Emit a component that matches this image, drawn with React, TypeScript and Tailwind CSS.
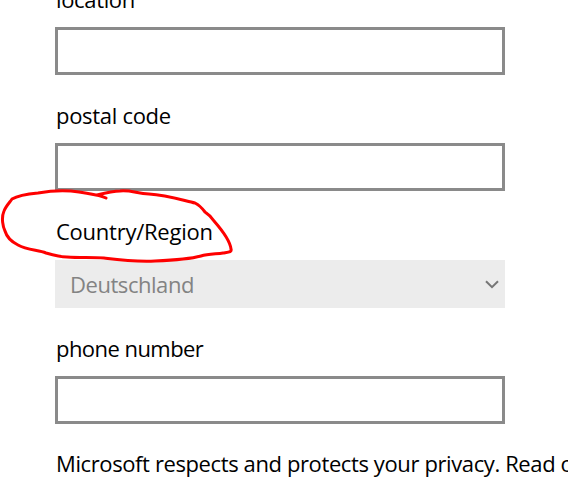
import React from 'react';

interface FieldLabelProps {
  htmlFor: string;
  className: string;
  children: React.ReactNode;
}

const FieldLabel: React.FC<FieldLabelProps> = ({ htmlFor, className, children }) => (
  <label htmlFor={htmlFor} className={`flex shrink-0 whitespace-nowrap pl-px pt-[25px] leading-[30px] ${className}`}>
    <span>{children}</span>
  </label>
);

const TextField: React.FC<{ id: string }> = ({ id }) => (
  <input
    id={id}
    type="text"
    className="block h-12 w-[450px] shrink-0 border-[3px] border-[#8a8a8a] bg-white px-3 outline-none"
  />
);

const App: React.FC = () => {
  return (
    <div className="relative h-[481px] w-[568px] overflow-hidden bg-white font-['Open_Sans','Noto_Sans',sans-serif] text-[22px] text-black">
      <form className="-mt-[41px] flex flex-col pl-[55px]">
        <FieldLabel htmlFor="location" className="h-[68px] tracking-[-0.35px]">location</FieldLabel>
        <TextField id="location" />

        <FieldLabel htmlFor="postal" className="h-[68px] tracking-[-0.3px]">postal code</FieldLabel>
        <TextField id="postal" />

        <FieldLabel htmlFor="country" className="h-[69px] tracking-[-0.25px]">Country/Region</FieldLabel>
        <div id="country" className="flex h-12 w-[450px] shrink-0 items-center justify-between bg-[#ececec] pl-[15px] pr-[6px] text-[#838383]">
          <span className="tracking-[-0.45px]">Deutschland</span>
          <svg className="h-[9px] w-[14px]" viewBox="0 0 14 9" fill="none" stroke="#767676" strokeWidth="2">
            <path d="M1 1.2 L7 7.2 L13 1.2" />
          </svg>
        </div>

        <FieldLabel htmlFor="phone" className="h-[68px] tracking-[-0.55px]">phone number</FieldLabel>
        <TextField id="phone" />

        <p className="whitespace-nowrap pl-px pt-6 leading-[30px] tracking-[-0.39px]">
          Microsoft respects and protects your privacy. Read our
        </p>
      </form>

      {/* Hand-drawn highlight around the country label */}
      <svg
        className="pointer-events-none absolute left-0 top-[180px] h-[90px] w-[240px]"
        viewBox="0 0 240 90"
        fill="none"
        stroke="#fe0000"
        strokeWidth="3"
        strokeLinecap="round"
        strokeLinejoin="round"
      >
        <path d="M106 18 C100 15 90 14 79 12 C65 10 50 11 38 13 C27 14 17 16 12 19 C10 22 6 26 4 31 C1 38 3 47 5 51 C7 58 12 62 18 65 C27 70 38 70 46 73 C53 75 60 77 67 77 C80 78 92 77 104 78 C120 80 135 82 155 81 C178 80 190 79 201 76 C208 74 217 74 223 73 C229 72 232 72 231 69 C230 60 221 49 214 41 C211 36 208 34 205 32 C202 28 199 25 195 23 C182 20 166 15 149 14 C136 13 130 10 120 11 C113 11 105 13 97 15" />
      </svg>
    </div>
  );
};

export default App;
